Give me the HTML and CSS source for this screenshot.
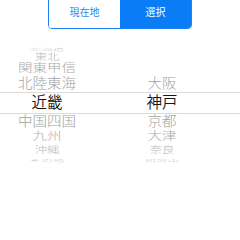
FILE: index.html
```html
<!DOCTYPE html>
<html lang="ja">
<head>
<meta charset="utf-8">
<link rel="stylesheet" href="styles.css">
</head>
<body>
<div class="screen">
  <div class="seg">
    <div class="seg-item">現在地</div>
    <div class="seg-item active">選択</div>
  </div>
  <div class="picker">
    <div class="row o4"><span class="t">北海道</span><span class="t"></span></div>
    <div class="row o3"><span class="t">東北</span><span class="t"></span></div>
    <div class="row o2"><span class="t">関東甲信</span><span class="t"></span></div>
    <div class="row o1"><span class="t">北陸東海</span><span class="t">大阪</span></div>
    <div class="row o0"><span class="t">近畿</span><span class="t">神戸</span></div>
    <div class="row o1"><span class="t">中国四国</span><span class="t">京都</span></div>
    <div class="row o2"><span class="t">九州</span><span class="t">大津</span></div>
    <div class="row o3"><span class="t">沖縄</span><span class="t">奈良</span></div>
    <div class="row o4"><span class="t">その他</span><span class="t">和歌山</span></div>
  </div>
</div>
</body>
</html>
```

FILE: styles.css
```css
html, body {
  margin: 0;
  padding: 0;
  background: #ffffff;
}

body {
  font-family: "Noto Sans CJK JP", "Noto Sans", sans-serif;
  width: 240px;
  height: 240px;
  overflow: hidden;
}

.screen {
  display: flex;
  flex-direction: column;
}

.seg {
  display: flex;
  margin: -7px 0 0 48px;
  width: 144px;
  height: 36px;
  box-sizing: border-box;
  border: 1px solid #1f82f2;
  border-radius: 4px;
  overflow: hidden;
}

.seg-item {
  flex: 1;
  display: flex;
  align-items: center;
  justify-content: center;
  font-size: 10px;
  color: #2f86e6;
  background: #ffffff;
  padding-top: 1px;
}

.seg-item.active {
  background: #0a7cf5;
  color: #ffffff;
}

.picker {
  display: flex;
  flex-direction: column;
  padding-top: 15px;
}

.row {
  display: grid;
  grid-template-columns: 94px 80px;
  column-gap: 28px;
  align-items: center;
  box-sizing: border-box;
}

.t {
  display: block;
  text-align: center;
  white-space: nowrap;
  line-height: 1;
  font-size: 14.5px;
  font-weight: 300;
  color: #a6a6a6;
}

.o0 {
  height: 22px;
  border-top: 1px solid #dcdcdc;
  border-bottom: 1px solid #dcdcdc;
}

.o0 .t {
  font-size: 15.5px;
  font-weight: 350;
  color: #161616;
  transform: translateY(-1.5px);
}

.o1 { height: 16px; }
.o1 .t { transform: translateY(-1.5px) scaleY(0.92); color: #a2a2a2; }

.o2 { height: 14px; }
.o2 .t { transform: translateY(-1.5px) scaleY(0.8); color: #ababab; }

.o3 { height: 11px; }
.o3 .t { transform: translateY(-1.5px) scale(0.85, 0.62); color: #b9b9b9; }

.o4 { height: 7px; }
.o4 .t { transform: translateY(-1px) scale(0.8, 0.2); color: #cbcbcb; }
```
